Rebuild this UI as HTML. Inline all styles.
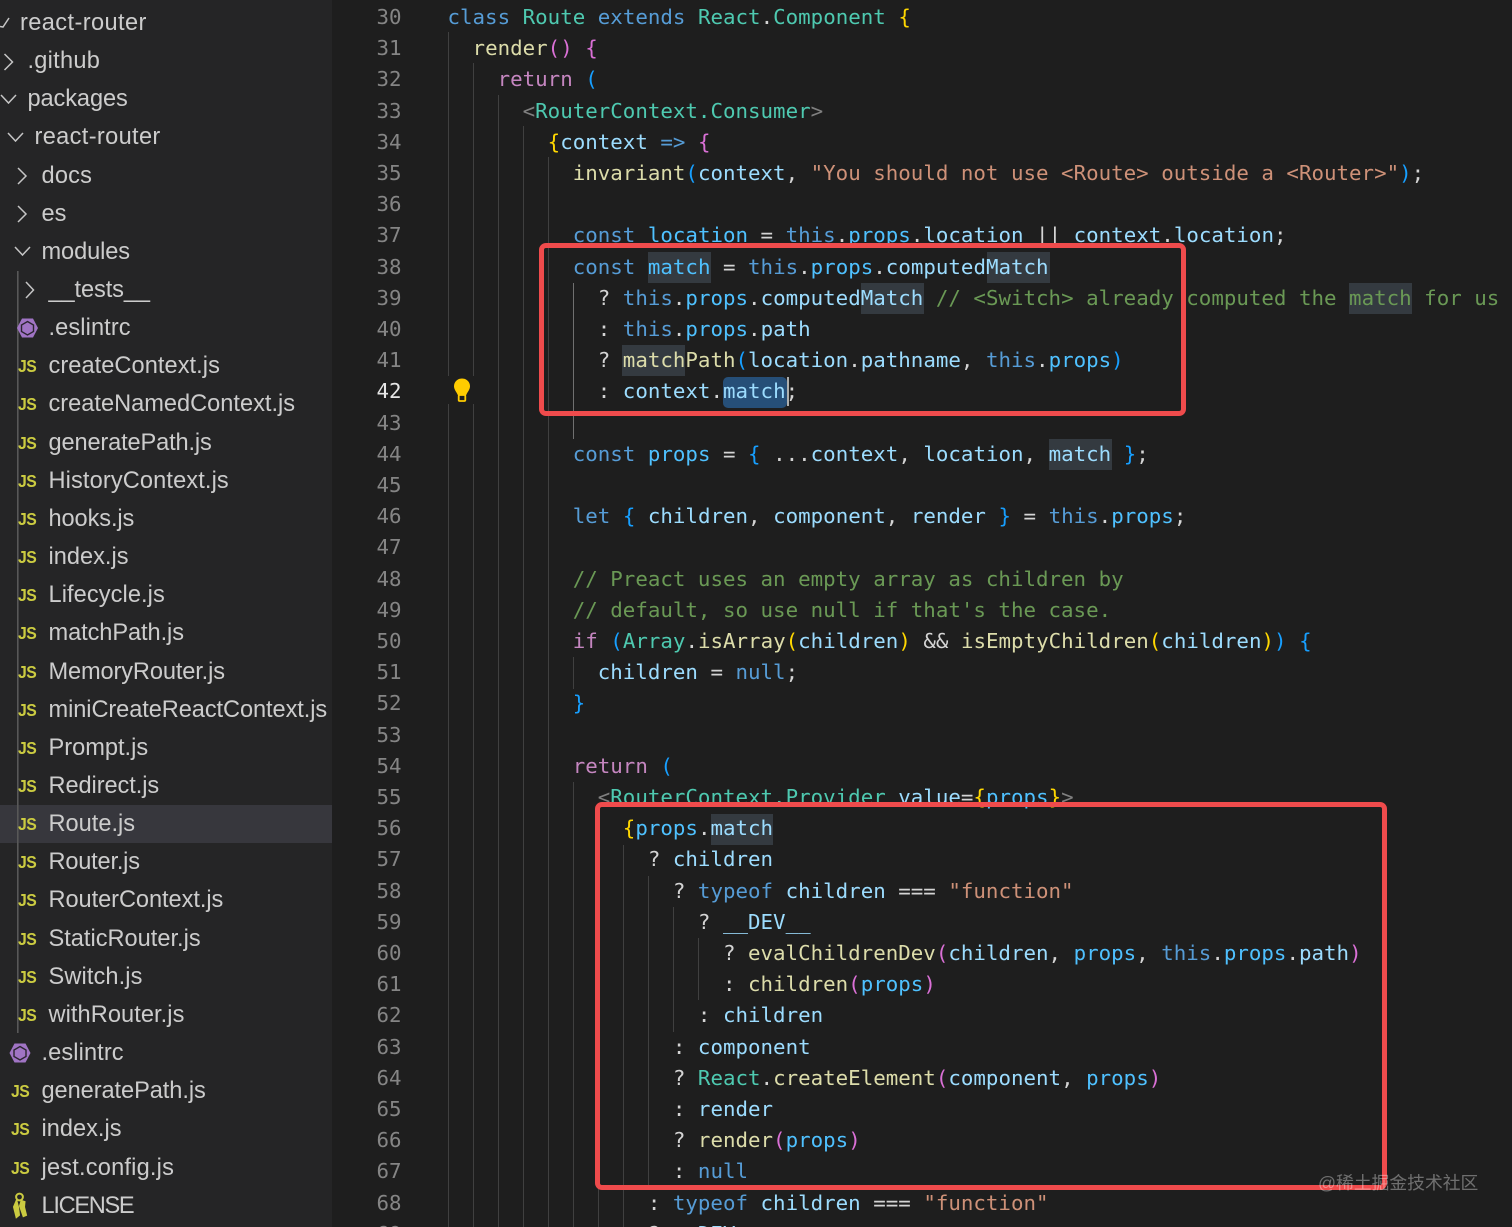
<!DOCTYPE html>
<html lang="en">
<head>
<meta charset="utf-8">
<title>Route.js</title>
<style>
html,body{margin:0;padding:0;background:#1e1e1e;}
#wrap{position:relative;width:1512px;height:1227px;overflow:hidden;background:#1e1e1e;}
#side{position:absolute;left:0;top:0;width:332px;height:1227px;background:#252526;overflow:hidden;}
#sel{position:absolute;left:0;top:805px;width:332px;height:38px;background:#37373d;}
#tree{position:absolute;left:0;top:3.9px;width:332px;font:23.6px/38.16px "Liberation Sans",sans-serif;color:#cccccc;}
#tree div{height:38.16px;position:relative;white-space:pre;}
.js{position:absolute;top:0;font:bold 17.5px/38px "Liberation Sans",sans-serif;color:#cbcb41;letter-spacing:-.5px;transform:scaleX(.9);transform-origin:left center;}
#nums{position:absolute;left:340px;width:61.5px;top:1.9px;text-align:right;color:#858585;}
#code{position:absolute;left:447.5px;top:1.9px;color:#d4d4d4;}
#nums,#code{font:20.8px/31.21px "DejaVu Sans Mono",monospace;}
#nums div,#code div{height:31.21px;white-space:pre;}
.h{position:absolute;background:#343a40;height:31px;}
.g{position:absolute;width:1.4px;background:#404040;}
.k{color:#569cd6}.v{color:#9cdcfe}.c{color:#4fc1ff}.f{color:#dcdcaa}.t{color:#4ec9b0}.s{color:#ce9178}
.m{color:#6a9955}.p{color:#c586c0}.y{color:#ffd700}.o{color:#da70d6}.b{color:#179fff}.e{color:#808080}
.box{position:absolute;box-sizing:border-box;border:5.5px solid #ef4b4c;border-radius:7px;}
#mark{position:absolute;left:1318px;top:1171px;font:17.8px/24px "Liberation Sans","Noto Sans CJK SC",sans-serif;color:rgba(255,255,255,.36);white-space:pre;}
</style>
</head>
<body>
<div id="wrap">

<div id="side">
<div id="sel"></div>
<svg width="332" height="1227" style="position:absolute;left:0;top:0" fill="none">
<rect x="17" y="271" width="1.6" height="762" fill="#585858"/>
<g stroke="#c5c5c5" stroke-width="1.5">
<path d="M0 26.5L3 27L9 18"/>
<path d="M4.5 54L12.5 62L4.5 70"/>
<path d="M1 95L8.5 103L16 95"/>
<path d="M8 133L15.5 141L23 133"/>
<path d="M18 168L26 176L18 184"/>
<path d="M18 206L26 214L18 222"/>
<path d="M15 247L22.5 255L30 247"/>
<path d="M26 282L33.5 290L26 298"/>
</g>
<polygon points="17,328 22,318.5 33,318.5 38,328 33,337.5 22,337.5" fill="#a074c4"/>
<polygon points="27.5,321.5 33.5,325 33.5,331.5 27.5,335 21.5,331.5 21.5,325" fill="none" stroke="#2b2530" stroke-width="1.4"/>
<polygon points="9.5,1053 14.5,1043.5 25.5,1043.5 30.5,1053 25.5,1062.5 14.5,1062.5" fill="#a074c4"/>
<polygon points="20,1046.5 26,1050 26,1056.5 20,1060 14,1056.5 14,1050" fill="none" stroke="#2b2530" stroke-width="1.4"/>
<g stroke="#cbcb41" stroke-width="2" fill="#cbcb41">
<circle cx="19.5" cy="1197" r="3.4" fill="none"/>
<path d="M16.5 1201L14 1207L16.5 1217L19 1215L18 1207Z"/>
<path d="M21.5 1201L20 1206L23.5 1216L26 1215L24 1207L24.5 1202Z"/>
</g>
</svg>
<div id="tree">
<div style="padding-left:20px;letter-spacing:.4px">react-router</div>
<div style="padding-left:27.5px;letter-spacing:.25px">.github</div>
<div style="padding-left:27.5px;letter-spacing:-.1px">packages</div>
<div style="padding-left:34.5px;letter-spacing:.35px">react-router</div>
<div style="padding-left:41.5px;letter-spacing:.2px">docs</div>
<div style="padding-left:41.5px">es</div>
<div style="padding-left:41.5px;letter-spacing:-.1px">modules</div>
<div style="padding-left:48.5px;letter-spacing:-.1px">__tests__</div>
<div style="padding-left:48.5px;letter-spacing:.1px">.eslintrc</div>
<div style="padding-left:48.5px;letter-spacing:.06px"><span class="js" style="left:18px">JS</span>createContext.js</div>
<div style="padding-left:48.5px"><span class="js" style="left:18px">JS</span>createNamedContext.js</div>
<div style="padding-left:48.5px;letter-spacing:-.14px"><span class="js" style="left:18px">JS</span>generatePath.js</div>
<div style="padding-left:48.5px;letter-spacing:.12px"><span class="js" style="left:18px">JS</span>HistoryContext.js</div>
<div style="padding-left:48.5px;letter-spacing:-.1px"><span class="js" style="left:18px">JS</span>hooks.js</div>
<div style="padding-left:48.5px"><span class="js" style="left:18px">JS</span>index.js</div>
<div style="padding-left:48.5px;letter-spacing:.08px"><span class="js" style="left:18px">JS</span>Lifecycle.js</div>
<div style="padding-left:48.5px;letter-spacing:-.08px"><span class="js" style="left:18px">JS</span>matchPath.js</div>
<div style="padding-left:48.5px;letter-spacing:-.13px"><span class="js" style="left:18px">JS</span>MemoryRouter.js</div>
<div style="padding-left:48.5px;letter-spacing:-.08px"><span class="js" style="left:18px">JS</span>miniCreateReactContext.js</div>
<div style="padding-left:48.5px"><span class="js" style="left:18px">JS</span>Prompt.js</div>
<div style="padding-left:48.5px;letter-spacing:-.08px"><span class="js" style="left:18px">JS</span>Redirect.js</div>
<div style="padding-left:48.5px"><span class="js" style="left:18px">JS</span>Route.js</div>
<div style="padding-left:48.5px;letter-spacing:-.2px"><span class="js" style="left:18px">JS</span>Router.js</div>
<div style="padding-left:48.5px;letter-spacing:-.06px"><span class="js" style="left:18px">JS</span>RouterContext.js</div>
<div style="padding-left:48.5px"><span class="js" style="left:18px">JS</span>StaticRouter.js</div>
<div style="padding-left:48.5px;letter-spacing:.1px"><span class="js" style="left:18px">JS</span>Switch.js</div>
<div style="padding-left:48.5px;letter-spacing:.07px"><span class="js" style="left:18px">JS</span>withRouter.js</div>
<div style="padding-left:41.5px;letter-spacing:.1px">.eslintrc</div>
<div style="padding-left:41.5px;letter-spacing:-.07px"><span class="js" style="left:11px">JS</span>generatePath.js</div>
<div style="padding-left:41.5px"><span class="js" style="left:11px">JS</span>index.js</div>
<div style="padding-left:41.5px;letter-spacing:.2px"><span class="js" style="left:11px">JS</span>jest.config.js</div>
<div style="padding-left:41.5px;letter-spacing:-1.3px">LICENSE</div>
</div>
</div>

<!-- word highlights -->
<div class="h" style="left:648px;top:252px;width:63px"></div>
<div class="h" style="left:987px;top:252px;width:63px"></div>
<div class="h" style="left:861px;top:283px;width:63px"></div>
<div class="h" style="left:1349px;top:283px;width:63px"></div>
<div class="h" style="left:622px;top:345px;width:63px"></div>
<div class="h" style="left:723px;top:376.5px;width:64px;background:#264f78;border-radius:5px"></div>
<div class="h" style="left:1049px;top:439px;width:63px"></div>
<div class="h" style="left:711px;top:813.5px;width:62px"></div>

<!-- indent guides -->
<div class="g" style="left:447.5px;top:32px;height:344px"></div>
<div class="g" style="left:447.5px;top:404px;height:823px"></div>
<div class="g" style="left:473px;top:63px;height:313px"></div>
<div class="g" style="left:473px;top:404px;height:823px"></div>
<div class="g" style="left:498px;top:95px;height:1132px"></div>
<div class="g" style="left:523px;top:126px;height:1101px"></div>
<div class="g" style="left:548px;top:157px;height:1070px"></div>
<div class="g" style="left:573px;top:283px;height:156px;background:#707070"></div>
<div class="g" style="left:573px;top:657px;height:32px"></div>
<div class="g" style="left:573px;top:782px;height:445px"></div>
<div class="g" style="left:598px;top:813px;height:414px"></div>
<div class="g" style="left:623px;top:845px;height:382px"></div>
<div class="g" style="left:648px;top:876px;height:312px"></div>
<div class="g" style="left:673px;top:907px;height:125px"></div>
<div class="g" style="left:698px;top:938px;height:62px"></div>

<!-- cursor -->
<div style="position:absolute;left:787px;top:377px;width:2.4px;height:29px;background:#aeafad"></div>

<!-- bulb -->
<svg width="24" height="30" style="position:absolute;left:450px;top:376px">
<path d="M12 2.5C7.3 2.5 4 6 4 10.3C4 13.6 6.3 15.6 7.8 19H16.2C17.7 15.6 20 13.6 20 10.3C20 6 16.7 2.5 12 2.5Z" fill="#ffcc00"/>
<rect x="8.7" y="19" width="6.6" height="6" rx="1" fill="#1e1e1e" stroke="#ffcc00" stroke-width="1.8"/>
</svg>

<div id="nums">
<div>30</div><div>31</div><div>32</div><div>33</div><div>34</div><div>35</div><div>36</div><div>37</div><div>38</div><div>39</div><div>40</div><div>41</div><div style="color:#e6e6e6">42</div><div>43</div><div>44</div><div>45</div><div>46</div><div>47</div><div>48</div><div>49</div><div>50</div><div>51</div><div>52</div><div>53</div><div>54</div><div>55</div><div>56</div><div>57</div><div>58</div><div>59</div><div>60</div><div>61</div><div>62</div><div>63</div><div>64</div><div>65</div><div>66</div><div>67</div><div>68</div><div>69</div>
</div>

<div id="code">
<div><span class="k">class</span> <span class="t">Route</span> <span class="k">extends</span> <span class="t">React</span>.<span class="t">Component</span> <span class="y">{</span></div>
<div>  <span class="f">render</span><span class="o">()</span> <span class="o">{</span></div>
<div>    <span class="p">return</span> <span class="b">(</span></div>
<div>      <span class="e">&lt;</span><span class="t">RouterContext.Consumer</span><span class="e">&gt;</span></div>
<div>        <span class="y">{</span><span class="v">context</span> <span class="k">=&gt;</span> <span class="o">{</span></div>
<div>          <span class="f">invariant</span><span class="b">(</span><span class="v">context</span>, <span class="s">"You should not use &lt;Route&gt; outside a &lt;Router&gt;"</span><span class="b">)</span>;</div>
<div></div>
<div>          <span class="k">const</span> <span class="c">location</span> = <span class="k">this</span>.<span class="c">props</span>.<span class="v">location</span> || <span class="v">context</span>.<span class="v">location</span>;</div>
<div>          <span class="k">const</span> <span class="c">match</span> = <span class="k">this</span>.<span class="c">props</span>.<span class="v">computedMatch</span></div>
<div>            ? <span class="k">this</span>.<span class="c">props</span>.<span class="v">computedMatch</span> <span class="m">// &lt;Switch&gt; already computed the match for us</span></div>
<div>            : <span class="k">this</span>.<span class="c">props</span>.<span class="v">path</span></div>
<div>            ? <span class="f">matchPath</span><span class="b">(</span><span class="v">location</span>.<span class="v">pathname</span>, <span class="k">this</span>.<span class="c">props</span><span class="b">)</span></div>
<div>            : <span class="v">context</span>.<span class="v">match</span>;</div>
<div></div>
<div>          <span class="k">const</span> <span class="c">props</span> = <span class="b">{</span> ...<span class="v">context</span>, <span class="v">location</span>, <span class="v">match</span> <span class="b">}</span>;</div>
<div></div>
<div>          <span class="k">let</span> <span class="b">{</span> <span class="v">children</span>, <span class="v">component</span>, <span class="v">render</span> <span class="b">}</span> = <span class="k">this</span>.<span class="c">props</span>;</div>
<div></div>
<div>          <span class="m">// Preact uses an empty array as children by</span></div>
<div>          <span class="m">// default, so use null if that's the case.</span></div>
<div>          <span class="p">if</span> <span class="b">(</span><span class="t">Array</span>.<span class="f">isArray</span><span class="y">(</span><span class="v">children</span><span class="y">)</span> &amp;&amp; <span class="f">isEmptyChildren</span><span class="y">(</span><span class="v">children</span><span class="y">)</span><span class="b">)</span> <span class="b">{</span></div>
<div>            <span class="v">children</span> = <span class="k">null</span>;</div>
<div>          <span class="b">}</span></div>
<div></div>
<div>          <span class="p">return</span> <span class="b">(</span></div>
<div>            <span class="e">&lt;</span><span class="t">RouterContext.Provider</span> <span class="v">value</span>=<span class="y">{</span><span class="c">props</span><span class="y">}</span><span class="e">&gt;</span></div>
<div>              <span class="y">{</span><span class="c">props</span>.<span class="v">match</span></div>
<div>                ? <span class="v">children</span></div>
<div>                  ? <span class="k">typeof</span> <span class="v">children</span> === <span class="s">"function"</span></div>
<div>                    ? <span class="v">__DEV__</span></div>
<div>                      ? <span class="f">evalChildrenDev</span><span class="o">(</span><span class="v">children</span>, <span class="c">props</span>, <span class="k">this</span>.<span class="c">props</span>.<span class="v">path</span><span class="o">)</span></div>
<div>                      : <span class="f">children</span><span class="o">(</span><span class="c">props</span><span class="o">)</span></div>
<div>                    : <span class="v">children</span></div>
<div>                  : <span class="v">component</span></div>
<div>                  ? <span class="t">React</span>.<span class="f">createElement</span><span class="o">(</span><span class="v">component</span>, <span class="c">props</span><span class="o">)</span></div>
<div>                  : <span class="v">render</span></div>
<div>                  ? <span class="f">render</span><span class="o">(</span><span class="c">props</span><span class="o">)</span></div>
<div>                  : <span class="k">null</span></div>
<div>                : <span class="k">typeof</span> <span class="v">children</span> === <span class="s">"function"</span></div>
<div>                ? <span class="v">__DEV__</span></div>
</div>

<!-- annotation boxes -->
<div class="box" style="left:539px;top:243px;width:647px;height:173px"></div>
<div class="box" style="left:595px;top:802px;width:792px;height:388px"></div>

<div id="mark">@稀土掘金技术社区</div>
</div>
</body>
</html>
